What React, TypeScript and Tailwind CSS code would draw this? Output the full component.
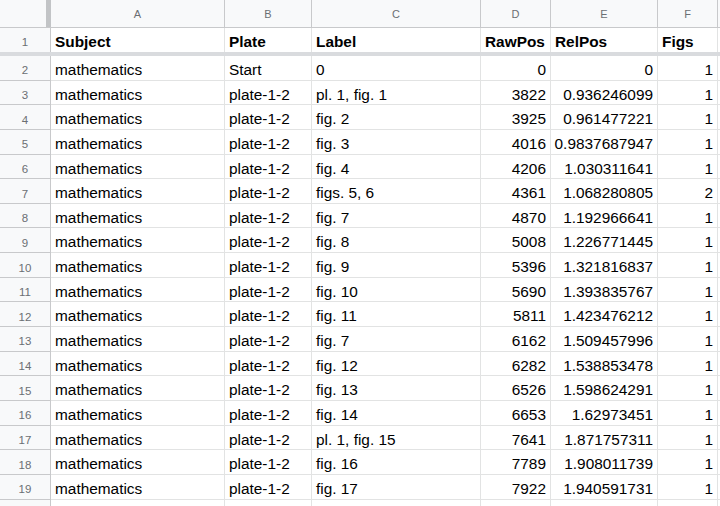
import React from "react";

type Row = [string, string, string, string, string, string];

const rows: Row[] = [
  ["mathematics", "Start", "0", "0", "0", "1"],
  ["mathematics", "plate-1-2", "pl. 1, fig. 1", "3822", "0.936246099", "1"],
  ["mathematics", "plate-1-2", "fig. 2", "3925", "0.961477221", "1"],
  ["mathematics", "plate-1-2", "fig. 3", "4016", "0.9837687947", "1"],
  ["mathematics", "plate-1-2", "fig. 4", "4206", "1.030311641", "1"],
  ["mathematics", "plate-1-2", "figs. 5, 6", "4361", "1.068280805", "2"],
  ["mathematics", "plate-1-2", "fig. 7", "4870", "1.192966641", "1"],
  ["mathematics", "plate-1-2", "fig. 8", "5008", "1.226771445", "1"],
  ["mathematics", "plate-1-2", "fig. 9", "5396", "1.321816837", "1"],
  ["mathematics", "plate-1-2", "fig. 10", "5690", "1.393835767", "1"],
  ["mathematics", "plate-1-2", "fig. 11", "5811", "1.423476212", "1"],
  ["mathematics", "plate-1-2", "fig. 7", "6162", "1.509457996", "1"],
  ["mathematics", "plate-1-2", "fig. 12", "6282", "1.538853478", "1"],
  ["mathematics", "plate-1-2", "fig. 13", "6526", "1.598624291", "1"],
  ["mathematics", "plate-1-2", "fig. 14", "6653", "1.62973451", "1"],
  ["mathematics", "plate-1-2", "pl. 1, fig. 15", "7641", "1.871757311", "1"],
  ["mathematics", "plate-1-2", "fig. 16", "7789", "1.908011739", "1"],
  ["mathematics", "plate-1-2", "fig. 17", "7922", "1.940591731", "1"],
];

const grid = "grid grid-cols-[51px_174px_87px_169px_70px_107px_60px_1fr]";
const cell = "flex items-end overflow-hidden whitespace-nowrap border-r border-b border-[#e2e3e3] px-[4px] pb-[1px]";
const rowNum =
  "flex items-end justify-center border-r border-b border-[#c8c9cb] bg-[#f8f9fa] pb-[2px] text-[11.5px] text-[#6b6f73]";

function ColumnHeader() {
  const letters = ["A", "B", "C", "D", "E", "F"];
  return (
    <div className={`${grid} h-[28px]`}>
      <div className="flex justify-end border-b border-[#c8c9cb] bg-[#f8f9fa]">
        <div className="h-full w-[5px] bg-[#c2c4c6]" />
      </div>
      {letters.map((l) => (
        <div
          key={l}
          className="flex items-center justify-center border-r border-b border-[#c8c9cb] bg-[#f8f9fa] pt-[1px] text-[11px] text-[#6b6f73]"
        >
          {l}
        </div>
      ))}
      <div className="border-b border-[#c8c9cb] bg-[#f8f9fa]" />
    </div>
  );
}

function TitleRow() {
  const titles = ["Subject", "Plate", "Label", "RawPos", "RelPos", "Figs"];
  return (
    <div className={`${grid} h-[24px]`}>
      <div className="flex items-end justify-center border-r border-[#c8c9cb] bg-[#f8f9fa] pb-[3px] text-[11.5px] text-[#6b6f73]">
        1
      </div>
      {titles.map((t) => (
        <div
          key={t}
          className="flex items-end overflow-hidden whitespace-nowrap border-r border-[#e2e3e3] px-[4px] pb-[1px] font-bold"
        >
          {t}
        </div>
      ))}
      <div />
    </div>
  );
}

export default function App() {
  return (
    <div className="h-[506px] w-[720px] overflow-hidden bg-white font-['Liberation_Sans',Arial,sans-serif] text-[15.4px] leading-[1.15] text-black">
      <ColumnHeader />
      <TitleRow />
      <div className="h-[4px] bg-[#d9dbde]" />
      {rows.map((r, i) => (
        <div key={i} className={`${grid} h-[24.65px]`}>
          <div className={rowNum}>{i + 2}</div>
          <div className={cell}>{r[0]}</div>
          <div className={cell}>{r[1]}</div>
          <div className={cell}>{r[2]}</div>
          <div className={`${cell} justify-end`}>{r[3]}</div>
          <div className={`${cell} justify-end`}>{r[4]}</div>
          <div className={`${cell} justify-end`}>{r[5]}</div>
          <div className="border-b border-[#e2e3e3]" />
        </div>
      ))}
      {/* next row, only its top edge shows */}
      <div className={`${grid} h-[24.65px]`}>
        <div className="border-r border-[#c8c9cb] bg-[#f8f9fa]" />
        <div className="border-r border-[#e2e3e3]" />
        <div className="border-r border-[#e2e3e3]" />
        <div className="border-r border-[#e2e3e3]" />
        <div className="border-r border-[#e2e3e3]" />
        <div className="border-r border-[#e2e3e3]" />
        <div className="border-r border-[#e2e3e3]" />
        <div />
      </div>
    </div>
  );
}
